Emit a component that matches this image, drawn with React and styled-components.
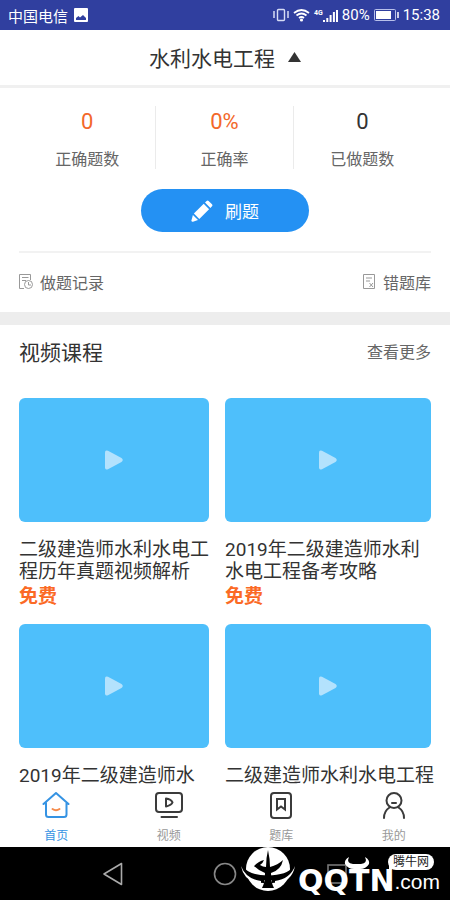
import React from "react";
import styled, { createGlobalStyle } from "styled-components";

const videos = [
  { id: 1, title: "二级建造师水利水电工程历年真题视频解析", price: "免费" },
  { id: 2, title: "2019年二级建造师水利水电工程备考攻略", price: "免费" },
  { id: 3, title: "2019年二级建造师水" },
  { id: 4, title: "二级建造师水利水电工程" },
];

const stats = [
  { label: "正确题数", value: "0", highlight: true },
  { label: "正确率", value: "0%", highlight: true },
  { label: "已做题数", value: "0", highlight: false },
];

const PictureIcon = () => (
  <svg width="14" height="14" viewBox="0 0 14 14">
    <rect width="14" height="14" rx="1" fill="#fff" />
    <path d="M2 12V10L4.500 8L6 9.500L9 7L12 10V12z" fill="#303f9f" />
  </svg>
);

const VibrateIcon = () => (
  <svg width="16" height="14" viewBox="0 0 16 14" fill="none" stroke="#d6dcf5">
    <rect x="4.5" y="1.5" width="7" height="11" rx="1" strokeWidth="1.4" />
    <path d="M1 3v7M15 3v7" strokeWidth="1.5" />
  </svg>
);

const WifiIcon = () => (
  <svg width="17" height="14" viewBox="0 0 17 14" fill="none" stroke="#fff">
    <path
      d="M1 5Q8.500-1 16 5M3.500 7.500Q8.500 3.500 13.500 7.500M6 10Q8.500 8 11 10"
      strokeWidth="1.800"
    />
    <circle cx="8.500" cy="12" r="1.600" fill="#fff" stroke="none" />
  </svg>
);

const SignalIcon = () => (
  <svg width="15" height="13" viewBox="0 0 15 13" stroke="#fff" strokeWidth="2">
    <path d="M1 11v2M4.300 9v4M7.600 6v7M10.900 3v10M14 1v12" />
  </svg>
);

const BatteryIcon = () => (
  <svg width="25" height="12" viewBox="0 0 25 12">
    <rect
      x="0.500"
      y="0.500"
      width="21"
      height="11"
      rx="1"
      fill="none"
      stroke="#b8c0ea"
    />
    <rect x="2" y="2" width="15" height="8" fill="#fff" />
    <path d="M24 3v6" stroke="#fff" strokeWidth="1.500" />
  </svg>
);

const ArrowUpIcon = () => (
  <svg width="13" height="10" viewBox="0 0 13 10">
    <path d="M6.500 0L13 10H0z" fill="#333" />
  </svg>
);

const PencilIcon = () => (
  <svg width="22" height="22" viewBox="0 0 22 22" fill="#fff">
    <path d="M14 2.500L15.600.900Q16.600 0 17.600.900L21 4.300Q22 5.300 21 6.300L19.400 8z" />
    <path d="M12.700 3.800L18.100 9.200L8.300 19L2.900 13.600z" />
    <path d="M1.900 14.900L7 20L2 21.700Q.300 22 .500 20.200z" />
  </svg>
);

const RecordIcon = () => (
  <svg width="14" height="15" viewBox="0 0 14 15" fill="none" stroke="#999">
    <path d="M5 14.500H.500V.500H11.500V6M3 3.500H9.500M3 6.500H7" />
    <circle cx="9.500" cy="10.500" r="4" />
    <path d="M9.500 8V11H12" />
  </svg>
);

const MistakeIcon = () => (
  <svg width="13" height="15" viewBox="0 0 13 15" fill="none" stroke="#999">
    <path d="M.500.500H11.500V14.500H.500zM3 4H9M3 7H7" />
    <path d="M6.500 9L10 13M10 9L6.500 13" />
  </svg>
);

const PlayIcon = () => (
  <svg width="18" height="20" viewBox="0 0 18 20">
    <path
      d="M0 2.500Q0-.500 3 .800L16.500 8Q19 10 16.500 12L3 19.200Q0 20.500 0 17.500z"
      fill="#b3e2fd"
    />
  </svg>
);

const HomeIcon = () => (
  <svg
    width="28"
    height="28"
    viewBox="0 0 28 28"
    fill="none"
    stroke="#3593e3"
    strokeWidth="2"
    strokeLinecap="round"
    strokeLinejoin="round"
  >
    <path d="M1.500 12L14 1L26.500 12M4 11V22.500Q4 25 6.500 25H22Q24.500 25 24.500 22.500V11" />
    <path d="M10.500 17Q14 19.500 17.500 17" stroke="#f58b4b" />
  </svg>
);

const VideoIcon = () => (
  <svg
    width="28"
    height="28"
    viewBox="0 0 28 28"
    fill="none"
    stroke="#3b3b3b"
    strokeWidth="2"
    strokeLinecap="round"
    strokeLinejoin="round"
  >
    <rect x="1" y="1" width="26" height="19" rx="3" />
    <path d="M11 6.500V14.500Q16.500 13 17.500 10.500Q16 7 11 6.500zM6.500 25H22" />
  </svg>
);

const BankIcon = () => (
  <svg
    width="28"
    height="28"
    viewBox="0 0 28 28"
    fill="none"
    stroke="#3b3b3b"
    strokeWidth="2"
  >
    <rect x="4" y="1" width="20" height="25" rx="3" />
    <path d="M10 7H18V17.500L14 14.500L10 17.500z" />
  </svg>
);

const MineIcon = () => (
  <svg
    width="28"
    height="28"
    viewBox="0 0 28 28"
    fill="none"
    stroke="#3b3b3b"
    strokeWidth="2"
    strokeLinecap="round"
  >
    <circle cx="14" cy="8.500" r="7.500" />
    <path d="M4 26Q4 19 9.500 15.500M18.500 15.500Q24 19 24 26M12 11H16" />
  </svg>
);

const BackIcon = () => (
  <svg width="22" height="24" viewBox="0 0 22 24" fill="none" stroke="#aaa">
    <path
      d="M19.500 1.500V22.500L2 12z"
      strokeWidth="1.600"
      strokeLinejoin="round"
    />
  </svg>
);

const CircleIcon = () => (
  <svg width="24" height="24" viewBox="0 0 24 24" fill="none" stroke="#888">
    <circle cx="12" cy="12" r="10.500" strokeWidth="1.600" />
  </svg>
);

const SquareIcon = () => (
  <svg width="22" height="22" viewBox="0 0 22 22" fill="none" stroke="#777">
    <rect x="2" y="2" width="18" height="18" strokeWidth="1.600" />
  </svg>
);

const BullLogo = () => (
  <svg width="56" height="46" viewBox="0 0 56 46">
    <circle cx="28" cy="22" r="22" fill="#fff" />
    <path d="M3 20Q9 28 28 28.500Q47 28 53 20L51 29Q42 36 32 36V33H24V36Q14 36 5 29z" />
    <path d="M28 3Q30 12 30 20Q38 18 43 13Q41 23 31 26Q31 36 34 41H22Q25 36 25 26Q18 23 14 19Q19 14 24 13Q23 16 20 18Q23 20 26 20Q26 11 28 3z" />
    <path
      d="M1 19Q6 32 21 34V37Q4 35 1 19zM55 19Q50 32 35 34V37Q52 35 55 19z"
      fill="#fff"
    />
  </svg>
);

const HornsIcon = () => (
  <svg width="26" height="13" viewBox="0 0 26 13" fill="#fff">
    <path d="M5 0Q2 6 9 7H17Q24 6 21 0Q26 3 25 7Q22 12 16 12H10Q4 12 1 7Q0 3 5 0z" />
  </svg>
);

const tabs = [
  { label: "首页", Icon: HomeIcon, active: true },
  { label: "视频", Icon: VideoIcon },
  { label: "题库", Icon: BankIcon },
  { label: "我的", Icon: MineIcon },
];

const VideoCard = ({ video }) => (
  <Card href="#video">
    <Thumbnail>
      <PlayIcon />
    </Thumbnail>
    <VideoTitle>{video.title}</VideoTitle>
    {video.price && <Price>{video.price}</Price>}
  </Card>
);

const App = () => {
  return (
    <Page>
      <GlobalStyle />
      <StatusBar>
        <StatusGroup $gap={6}>
          <span>中国电信</span>
          <PictureIcon />
        </StatusGroup>
        <StatusGroup $gap={4}>
          <VibrateIcon />
          <WifiIcon />
          <Network>
            <small>4G</small>
            <SignalIcon />
          </Network>
          <span>80%</span>
          <BatteryIcon />
          <span>15:38</span>
        </StatusGroup>
      </StatusBar>
      <Header>
        <SubjectButton type="button">
          水利水电工程
          <ArrowUpIcon />
        </SubjectButton>
      </Header>
      <Content>
        <Practice>
          <Stats>
            {stats.map((stat) => (
              <Stat key={stat.label}>
                <StatValue $highlight={stat.highlight}>{stat.value}</StatValue>
                <StatLabel>{stat.label}</StatLabel>
              </Stat>
            ))}
          </Stats>
          <PracticeButton type="button">
            <PencilIcon />
            刷题
          </PracticeButton>
          <Links>
            <TextLink href="#records">
              <RecordIcon />
              做题记录
            </TextLink>
            <TextLink href="#mistakes">
              <MistakeIcon />
              错题库
            </TextLink>
          </Links>
        </Practice>
        <Courses>
          <SectionHeader>
            <SectionTitle>视频课程</SectionTitle>
            <TextLink href="#more">查看更多</TextLink>
          </SectionHeader>
          <VideoGrid>
            {videos.map((video) => (
              <VideoCard key={video.id} video={video} />
            ))}
          </VideoGrid>
        </Courses>
      </Content>
      <TabBar>
        {tabs.map(({ label, Icon, active }) => (
          <Tab key={label} href="#tab" $active={active}>
            <Icon />
            {label}
          </Tab>
        ))}
      </TabBar>
      <SystemBar>
        <SystemButton type="button" aria-label="返回">
          <BackIcon />
        </SystemButton>
        <SystemButton type="button" aria-label="主屏幕">
          <CircleIcon />
        </SystemButton>
        <SystemButton type="button" aria-label="最近任务">
          <SquareIcon />
        </SystemButton>
        <Watermark>
          <BullLogo />
          <Brand>QQTN</Brand>
          <Domain>.com</Domain>
          <Horns>
            <HornsIcon />
          </Horns>
          <Bubble>腾牛网</Bubble>
        </Watermark>
      </SystemBar>
    </Page>
  );
};

const GlobalStyle = createGlobalStyle`
  * {
    box-sizing: border-box;
  }

  body {
    margin: 0;
    background: #fff;
    font-family: Roboto, "Noto Sans CJK SC", sans-serif;
  }

  button {
    padding: 0;
    border: none;
    background: none;
    font-family: inherit;
  }

  a {
    color: inherit;
    text-decoration: none;
  }

  svg {
    display: block;
    flex-shrink: 0;
  }
`;

const Page = styled.div`
  display: flex;
  flex-direction: column;
  height: 100vh;
  overflow: hidden;
`;

const StatusBar = styled.div`
  display: flex;
  flex-shrink: 0;
  align-items: center;
  justify-content: space-between;
  height: 30px;
  padding: 0 10px 0 8px;
  background: #303f9f;
  color: #fff;
  font-size: 15px;
`;

const StatusGroup = styled.div`
  display: flex;
  align-items: center;
  gap: ${({ $gap }) => $gap}px;
`;

const Network = styled.div`
  display: flex;
  align-items: flex-end;

  small {
    align-self: flex-start;
    font-size: 7px;
    font-weight: bold;
    line-height: 8px;
  }
`;

const Header = styled.header`
  display: flex;
  flex-shrink: 0;
  align-items: center;
  justify-content: center;
  height: 58px;
  padding-bottom: 2px;
  border-bottom: 3px solid #f0f0f0;
`;

const SubjectButton = styled.button`
  display: flex;
  align-items: center;
  gap: 13px;
  color: #333;
  font-size: 21px;
`;

const Content = styled.main`
  flex: 1;
  min-height: 0;
  overflow: hidden;
`;

const Practice = styled.section`
  padding: 18px 19px 0;
  border-bottom: 13px solid #ededed;
`;

const Stats = styled.div`
  display: grid;
  grid-template-columns: repeat(3, 1fr);
`;

const Stat = styled.div`
  display: flex;
  flex-direction: column;
  align-items: center;
  gap: 10px;
  height: 63px;
  border-right: 1px solid #ebebeb;

  &:last-child {
    border-right: none;
  }
`;

const StatValue = styled.div`
  color: ${({ $highlight }) => ($highlight ? "#f3682a" : "#333")};
  font-size: 22px;
  line-height: 32px;
`;

const StatLabel = styled.div`
  color: #666;
  font-size: 16px;
  line-height: 24px;
`;

const PracticeButton = styled.button`
  display: flex;
  align-items: center;
  justify-content: center;
  gap: 12px;
  width: 168px;
  height: 43px;
  margin: 20px auto 19px;
  border-radius: 22px;
  background: #2491f3;
  color: #fff;
  font-size: 17px;
`;

const Links = styled.div`
  display: flex;
  align-items: center;
  justify-content: space-between;
  height: 61px;
  padding-bottom: 2px;
  border-top: 2px solid #f2f2f2;
`;

const TextLink = styled.a`
  display: flex;
  align-items: center;
  gap: 7px;
  color: #666;
  font-size: 16px;
`;

const Courses = styled.section`
  padding: 0 19px;
`;

const SectionHeader = styled.div`
  display: flex;
  align-items: center;
  justify-content: space-between;
  height: 52px;
`;

const SectionTitle = styled.h2`
  margin: 0;
  color: #333;
  font-size: 21px;
  font-weight: normal;
`;

const VideoGrid = styled.div`
  display: grid;
  grid-template-columns: 12fr 13fr;
  gap: 15px 16px;
  padding-top: 21px;
`;

const Card = styled.a`
  display: flex;
  flex-direction: column;
`;

const Thumbnail = styled.div`
  display: flex;
  align-items: center;
  justify-content: center;
  height: 124px;
  border-radius: 6px;
  background: #4ebffb;
`;

/* a full line of 19px characters runs slightly past the thumbnail */
const VideoTitle = styled.div`
  margin: 17px -4px 2px 0;
  color: #333;
  font-size: 19px;
  line-height: 22px;
`;

const Price = styled.div`
  color: #fb6a25;
  font-size: 19px;
  font-weight: bold;
  line-height: 24px;
`;

const TabBar = styled.nav`
  display: grid;
  flex-shrink: 0;
  grid-template-columns: repeat(4, 1fr);
  height: 60px;
  background: #fff;
`;

const Tab = styled.a`
  display: flex;
  flex-direction: column;
  align-items: center;
  gap: 7px;
  padding-top: 5px;
  color: ${({ $active }) => ($active ? "#3593e3" : "#999")};
  font-size: 12px;
  line-height: 18px;
`;

const SystemBar = styled.div`
  position: relative;
  display: flex;
  flex-shrink: 0;
  justify-content: space-evenly;
  height: 53px;
  padding: 0 13px;
  background: #000;
`;

const SystemButton = styled.button`
  display: flex;
  align-items: center;
  justify-content: center;
  width: 24px;
`;

const Watermark = styled.div`
  position: absolute;
  right: 10px;
  bottom: 7px;
  display: flex;
  align-items: flex-end;
  color: #fff;
`;

const Brand = styled.span`
  margin-left: 2px;
  font-family: "DejaVu Sans", sans-serif;
  font-size: 30px;
  font-weight: bold;
  line-height: 24px;
`;

const Domain = styled.span`
  font-family: "Liberation Sans", sans-serif;
  font-size: 21px;
  line-height: 22px;
`;

const Horns = styled.div`
  position: absolute;
  top: 10px;
  right: 70px;
`;

const Bubble = styled.div`
  position: absolute;
  top: 7px;
  right: 6px;
  padding: 0 5px;
  border-radius: 8px;
  background: #fff;
  color: #222;
  font-size: 12px;
  line-height: 16px;

  &::after {
    content: "";
    position: absolute;
    top: 10px;
    left: 1px;
    border-top: 8px solid #fff;
    border-right: 8px solid transparent;
  }
`;

export default App;
